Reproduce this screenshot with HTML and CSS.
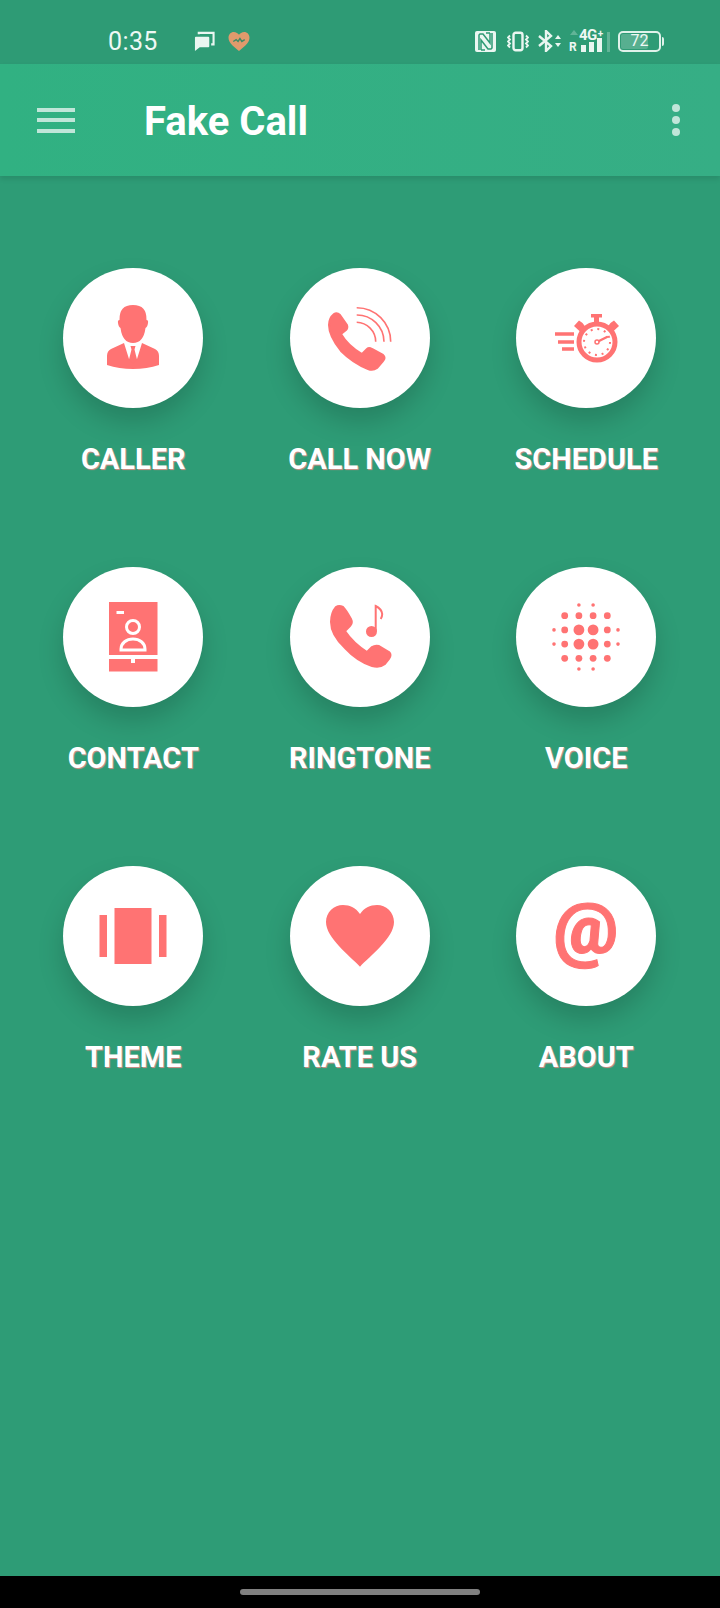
FILE: index.html
```html
<!DOCTYPE html>
<html lang="en">
<head>
<meta charset="utf-8">
<title>Fake Call</title>
<link rel="stylesheet" href="styles.css">
</head>
<body>
<div class="screen">
  <header class="status">
    <span class="clock">0:35</span>
    <svg class="st-msg" viewBox="0 0 22 22"><path class="w" d="M1 7q0-1 1-1h13q1 0 1 1v9q0 1-1 1H6l-5 4z"/><path class="ln" d="M5 3.500V2h15.500v12H18"/></svg>
    <svg class="st-heart" viewBox="0 0 24 22"><path class="o" d="M12 21C8 17 1 13 1 7c0-3.500 2.500-6 5.500-6C9 1 11 2.500 12 4c1-1.500 3-3 5.500-3C20.500 1 23 3.500 23 7c0 6-7 10-11 14z"/><path class="gl" d="M6 11l3-2 2 2 2-3 2 3 3-2"/></svg>
    <span class="status-gap"></span>
    <svg class="st-nfc" viewBox="0 0 21 21"><rect class="w" width="21" height="21" rx="2"/><path class="dk-ln" d="M4 19V4l1-1h3l7 9V2M17 2v15l-1 1h-3L6 9v10M11 2h4M6 19h4"/></svg>
    <svg class="st-vib" viewBox="0 0 22 20"><rect class="ln2" x="6.500" y="1.200" width="9" height="17.600" rx="2.200"/><path class="ln2 thin" d="M3 4L1 6l2 2-2 2 2 2-2 2 2 2M19 4l2 2-2 2 2 2-2 2 2 2-2 2"/></svg>
    <svg class="st-bt" viewBox="0 0 23 22"><path class="ln2" d="M1 6l12 10-5 5V1l5 5L1 16"/><path class="w" d="M17 9l3-4 3 4zM17 13h6l-3 4z"/></svg>
    <div class="st-signal">
      <span class="st-tri"></span>
      <span class="st-r">R</span>
      <span class="st-4g">4G<sup>+</sup></span>
      <span class="bars"><i class="b1"></i><i class="b2"></i><i class="b3"></i><i class="b4"></i></span>
    </div>
    <div class="battery"><span class="level"></span><span class="pct">72</span><span class="tip"></span></div>
  </header>

  <div class="appbar">
    <button class="menu"><i></i><i></i><i></i></button>
    <h1 class="title">Fake Call</h1>
    <button class="more"><i></i><i></i><i></i></button>
  </div>

  <main class="grid">
    <a class="cell">
      <span class="disc"><svg viewBox="0 0 140 140">
        <path class="f" d="M56.500 52q-.5-15 13.500-15t13.500 15q2 0 1.500 3-.5 4-2.500 5-2 15-12.500 15t-12.500-15q-2-1-2.500-5-.5-3 1.500-3z"/>
        <path class="f" d="M61 75l-13 6q-4 2-4 7v9q12 4 26 4t26-4v-9q0-5-4-7l-13-6-5 16h-8z"/>
        <path class="f" d="M67.500 78h5l-1 3.500 2.500 10-4 4-4-4 2.500-10z"/>
      </svg></span>
      <span class="label">CALLER</span>
    </a>
    <a class="cell">
      <span class="disc"><svg viewBox="0 0 140 140">
        <path class="f fat" d="M44 46q3-2 6 1l7 10q1 3-1 5l-5 4q7 12 21 20l5-5q2-2 5 0l11 6q3 3 0 6l-6 7q-4 3-9 1q-15-6-27-18Q39 68 39 57q0-7 5-11z"/>
        <path class="arc" d="M66.700 39.700A34 34 0 0 1 100.700 73.700M66.700 47A27 27 0 0 1 94 73.700M66.700 54.300A19.500 19.500 0 0 1 85.700 73.700"/>
      </svg></span>
      <span class="label">CALL NOW</span>
    </a>
    <a class="cell">
      <span class="disc"><svg viewBox="0 0 140 140">
        <path class="f" d="M75 46h11v3.500h-3V55h-5v-5.500h-3zM58 58l5-5.500 3.500 2.500 3 4-5 5zM103 58l-5-5.500-3.500 2.500-3 4 5 5z"/>
        <circle class="ring" cx="81" cy="74" r="18"/>
        <circle class="ticks" cx="81" cy="74" r="13"/>
        <path class="hand" d="M81 74l10-5"/>
        <circle class="hub" cx="81" cy="74" r="2"/>
        <path class="speed" d="M39 66h19M42 74h16M46 81h12"/>
      </svg></span>
      <span class="label">SCHEDULE</span>
    </a>
    <a class="cell">
      <span class="disc"><svg viewBox="0 0 140 140">
        <rect class="f" x="46" y="35" width="48.500" height="53"/>
        <path class="f" d="M46 92h22v4h4v-4h22.500v12.500H46z"/>
        <path class="wl" d="M53.500 45.500h7.500"/>
        <circle class="wl" cx="70" cy="60" r="6.500"/>
        <path class="wl" d="M58 83v-1c0-6 5.500-10 12-10s12 4 12 10v1z"/>
      </svg></span>
      <span class="label">CONTACT</span>
    </a>
    <a class="cell">
      <span class="disc"><svg viewBox="0 0 140 140">
        <path class="f fat" d="M46 40q3-2 7 0q3 3 8 12q2 4-1 7l-5 5q8 12 22 21l5-5q3-2 7-1l10 6q3 3 0 7l-4 5q-5 4-13 2q-15-5-27-18Q41 68 41 55q0-9 5-15z"/>
        <ellipse class="f" cx="81.500" cy="64.500" rx="5.500" ry="5.500"/>
        <path class="note" d="M85.700 64V39q6 3 6.500 8q0 3-1.500 5"/>
      </svg></span>
      <span class="label">RINGTONE</span>
    </a>
    <a class="cell">
      <span class="disc"><svg viewBox="0 0 140 140" class="f">
        <circle cx="62.900" cy="38" r="1.800"/><circle cx="77.100" cy="38" r="1.800"/>
        <circle cx="48.700" cy="48.700" r="3.400"/><circle cx="62.900" cy="48.700" r="3.400"/><circle cx="77.100" cy="48.700" r="3.400"/><circle cx="91.300" cy="48.700" r="3.400"/>
        <circle cx="38" cy="62.900" r="1.800"/><circle cx="48.700" cy="62.900" r="3.400"/><circle cx="62.900" cy="62.900" r="5.400"/><circle cx="77.100" cy="62.900" r="5.400"/><circle cx="91.300" cy="62.900" r="3.400"/><circle cx="102" cy="62.900" r="1.800"/>
        <circle cx="38" cy="77.100" r="1.800"/><circle cx="48.700" cy="77.100" r="3.400"/><circle cx="62.900" cy="77.100" r="5.400"/><circle cx="77.100" cy="77.100" r="5.400"/><circle cx="91.300" cy="77.100" r="3.400"/><circle cx="102" cy="77.100" r="1.800"/>
        <circle cx="48.700" cy="91.300" r="3.400"/><circle cx="62.900" cy="91.300" r="3.400"/><circle cx="77.100" cy="91.300" r="3.400"/><circle cx="91.300" cy="91.300" r="3.400"/>
        <circle cx="62.900" cy="102" r="1.800"/><circle cx="77.100" cy="102" r="1.800"/>
      </svg></span>
      <span class="label">VOICE</span>
    </a>
    <a class="cell">
      <span class="disc"><svg viewBox="0 0 140 140">
        <rect class="f" x="51.500" y="42" width="37" height="56"/>
        <rect class="f" x="36.500" y="49" width="7.500" height="42"/>
        <rect class="f" x="96" y="49" width="7.500" height="42"/>
      </svg></span>
      <span class="label">THEME</span>
    </a>
    <a class="cell">
      <span class="disc"><svg viewBox="0 0 140 140">
        <path class="f" d="M70 100.700C60 90 36 72 36 56 36 46 44 39 53 39c7 0 13 3 17 9 4-6 10-9 17-9 9 0 17 7 17 17 0 16-24 34-34 44.700z"/>
      </svg></span>
      <span class="label">RATE US</span>
    </a>
    <a class="cell">
      <span class="disc"><svg viewBox="0 0 140 140"><text class="at" x="70" y="87">@</text></svg></span>
      <span class="label">ABOUT</span>
    </a>
  </main>

  <footer class="navbar"><span class="pill"></span></footer>
</div>
</body>
</html>
```
FILE: styles.css
```css
* { box-sizing: border-box; }
html, body { margin: 0; padding: 0; }
body { font-family: Roboto, "Liberation Sans", sans-serif; background: #2e9c76; }
.screen { width: 720px; height: 1608px; display: flex; flex-direction: column; overflow: hidden; background: #2e9c76; }

/* status bar */
.status { height: 64px; flex: none; display: flex; align-items: center; padding: 18px 0 0 108px; background: #2e9b75; color: #eef8f4; }
.clock { font-size: 25px; line-height: 28px; letter-spacing: 0.4px; width: 86px; padding-top: 2px; }
.status svg { display: block; flex: none; }
.status .w { fill: #eaf6f1; }
.status .dk-ln { fill: none; stroke: #2e9b75; stroke-width: 1.500; }
.status .ln { fill: none; stroke: #eaf6f1; stroke-width: 2.200; }
.status .ln2 { fill: none; stroke: #eaf6f1; stroke-width: 2.400; }
.status .thin { stroke-width: 1.800; }
.status .o { fill: #e09a6c; }
.status .gl { fill: none; stroke: #3d8a66; stroke-width: 1.500; }
.st-msg { width: 21px; height: 21px; }
.st-heart { width: 24px; height: 21px; margin-left: 12px; }
.status-gap { flex: 1; }
.st-nfc { width: 21px; height: 21px; }
.st-vib { width: 22px; height: 21px; margin-left: 11px; }
.st-bt { width: 23px; height: 22px; margin-left: 9px; }
.st-signal { position: relative; width: 38px; height: 22px; margin-left: 8px; font-weight: 700; }
.st-tri { position: absolute; left: 1px; top: 0; border: 4px solid transparent; border-bottom: 5px solid rgba(255,255,255,0.25); border-top: 0; }
.st-r { position: absolute; left: 0; bottom: -1px; font-size: 12px; line-height: 12px; }
.st-4g { position: absolute; left: 10px; top: -2px; font-size: 15px; line-height: 15px; letter-spacing: -0.5px; }
.st-4g sup { font-size: 10px; line-height: 0; vertical-align: 3px; margin-left: 1px; }
.bars { position: absolute; left: 12px; bottom: 0; display: flex; gap: 3px; align-items: flex-end; }
.bars i { display: block; width: 5px; background: #eaf6f1; }
.bars .b1 { height: 7px; }
.bars .b2 { height: 10px; }
.bars .b3 { height: 14px; }
.bars .b4 { width: 3px; height: 20px; margin-left: 2px; background: rgba(255,255,255,0.25); }
.battery { position: relative; width: 43px; height: 21px; margin: 0 59px 0 11px; border: 2px solid #dff2ea; border-radius: 5px; display: flex; align-items: center; justify-content: center; }
.level { position: absolute; left: 1px; top: 1px; bottom: 1px; width: 70%; background: rgba(255,255,255,0.2); border-radius: 2px; }
.pct { position: relative; font-size: 16px; line-height: 16px; color: #eef8f4; }
.tip { position: absolute; right: -5px; top: 4px; width: 2px; height: 9px; background: #dff2ea; border-radius: 0 2px 2px 0; }

/* app bar */
.appbar { position: relative; height: 112px; flex: none; display: flex; align-items: center; padding: 0 0 0 37px; background: linear-gradient(90deg, #31b182, #36ae85); box-shadow: 0 3px 5px rgba(0,0,0,0.1); }
.menu, .more { border: 0; padding: 0; background: none; display: flex; flex-direction: column; }
.menu { width: 38px; gap: 6.500px; }
.menu i { display: block; height: 4px; background: #c0e6d9; }
.title { margin: 4px 0 0 69px; flex: 1; font-size: 40px; line-height: 44px; font-weight: 700; color: #fff; }
.more { width: 8px; gap: 4px; margin: 0 40px 0 0; }
.more i { display: block; width: 8px; height: 8px; border-radius: 50%; background: #c0e6d9; }

/* menu grid */
.grid { flex: 1; display: grid; grid-template-columns: repeat(3, 1fr); grid-auto-rows: 207px; row-gap: 92px; align-content: start; padding: 92px 20.500px 0 20px; }
.cell { display: flex; flex-direction: column; align-items: center; }
.disc { width: 140px; height: 140px; border-radius: 50%; background: #fff; box-shadow: 0 14px 26px rgba(0,0,0,0.17); flex: none; }
.disc svg { display: block; width: 140px; height: 140px; }
.label { margin-top: 34px; font-size: 29px; line-height: 34px; font-weight: 700; color: #fff; white-space: nowrap; text-shadow: 1px 1px 1px #d98e88; }

.f { fill: #ff7373; }
.fat { stroke: #ff7373; stroke-width: 2; stroke-linejoin: round; }
.arc { fill: none; stroke: #ff7373; stroke-width: 1.600; }
.ring { fill: none; stroke: #ff7373; stroke-width: 5; }
.ticks { fill: none; stroke: #ff7373; stroke-width: 2; stroke-dasharray: 2 4.800; }
.hand { fill: none; stroke: #ff7373; stroke-width: 2.500; stroke-linecap: round; }
.hub { fill: #fff; stroke: #ff7373; stroke-width: 1.500; }
.speed { fill: none; stroke: #ff7373; stroke-width: 3.600; }
.wl { fill: none; stroke: #fff; stroke-width: 3; }
.note { fill: none; stroke: #ff7373; stroke-width: 2; }
.at { fill: #ff7373; stroke: #ff7373; stroke-width: 1; font-family: Roboto, sans-serif; font-weight: 900; font-size: 72px; text-anchor: middle; }

/* nav bar */
.navbar { height: 32px; flex: none; display: flex; justify-content: center; align-items: center; background: #000; }
.pill { display: block; width: 240px; height: 6px; border-radius: 3px; background: #808080; }
```
